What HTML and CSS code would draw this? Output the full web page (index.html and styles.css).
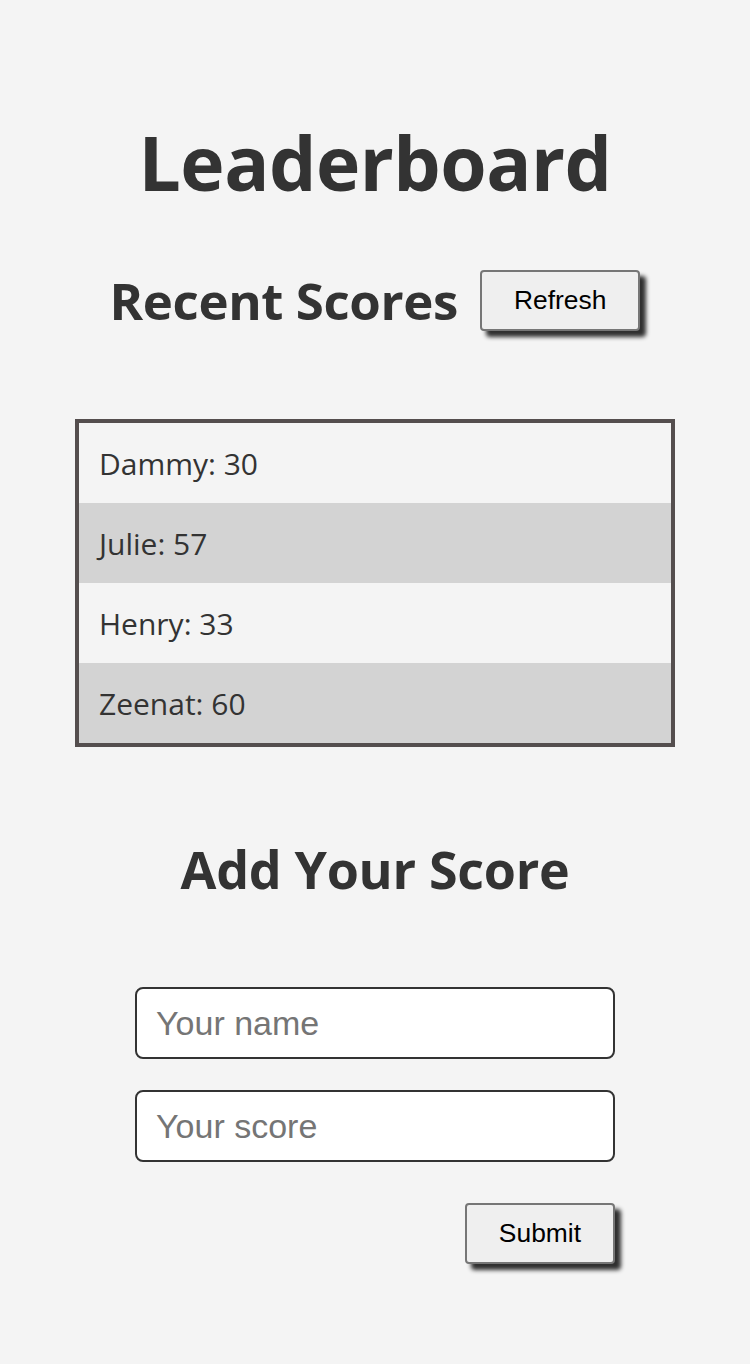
FILE: index.html
```html
<!DOCTYPE html>
<html lang="en">
<head>
<meta charset="utf-8">
<title>Leaderboard</title>
<link rel="stylesheet" href="styles.css">
</head>
<body>
<main class="page">
  <h1 class="title">Leaderboard</h1>
  <div class="recent-head">
    <h2 class="section-title">Recent Scores</h2>
    <button class="btn" type="button">Refresh</button>
  </div>
  <ul class="scores">
    <li class="score-row">Dammy: 30</li>
    <li class="score-row">Julie: 57</li>
    <li class="score-row">Henry: 33</li>
    <li class="score-row">Zeenat: 60</li>
  </ul>
  <h2 class="add-title">Add Your Score</h2>
  <form class="score-form">
    <input class="field" type="text" placeholder="Your name">
    <input class="field" type="text" placeholder="Your score">
    <div class="form-actions">
      <button class="btn" type="button">Submit</button>
    </div>
  </form>
</main>
</body>
</html>
```

FILE: styles.css
```css
html, body {
  margin: 0;
  padding: 0;
  background: #f4f4f4;
}

body {
  font-family: "Open Sans", "Noto Sans", sans-serif;
  color: #333333;
}

.page {
  display: flex;
  flex-direction: column;
  align-items: center;
  padding-top: 125px;
  padding-bottom: 60px;
}

.title {
  margin: 0;
  font-size: 75px;
  line-height: 75px;
  font-weight: 700;
  letter-spacing: -0.5px;
}

.recent-head {
  margin-top: 70px;
  display: flex;
  align-items: center;
  gap: 22px;
  height: 60px;
}

.section-title {
  margin: 0;
  font-size: 51px;
  line-height: 51px;
  font-weight: 700;
  letter-spacing: -0.4px;
}

.btn {
  height: 61px;
  padding: 0 32px;
  border: 2px solid #767676;
  border-radius: 4px;
  background: #efefef;
  color: #000;
  font-family: "Liberation Sans", Arial, sans-serif;
  font-size: 26.4px;
  box-shadow: 6px 6px 4px #303030;
}

.scores {
  list-style: none;
  margin: 89px 0 0;
  padding: 0;
  width: 592px;
  border: 4px solid #544e4e;
}

.score-row {
  height: 80px;
  display: flex;
  align-items: center;
  padding-left: 20px;
  font-size: 30px;
}

.score-row:nth-child(even) {
  background: #d3d3d3;
}

.add-title {
  margin: 96px 0 0;
  font-size: 52px;
  line-height: 52px;
  font-weight: 700;
  letter-spacing: -0.3px;
}

.score-form {
  margin-top: 92px;
  width: 480px;
  display: flex;
  flex-direction: column;
  gap: 31px;
}

.field {
  box-sizing: border-box;
  width: 100%;
  height: 72px;
  padding: 0 19px;
  border: 2px solid #333333;
  border-radius: 8px;
  background: #ffffff;
  font-family: "Liberation Sans", Arial, sans-serif;
  font-size: 34px;
  color: #333;
}

.field::placeholder {
  color: #757575;
}

.form-actions {
  display: flex;
  justify-content: flex-end;
  margin-top: 10px;
}
```
